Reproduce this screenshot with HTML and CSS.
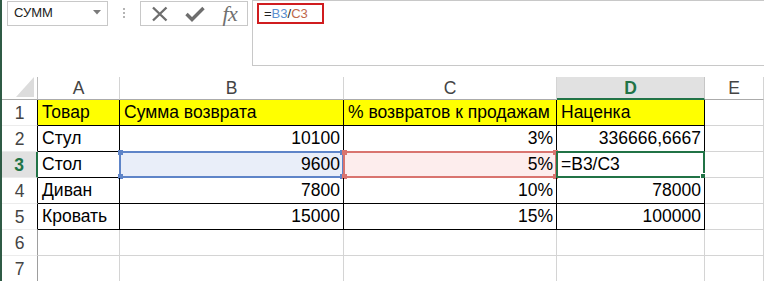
FILE: index.html
```html
<!DOCTYPE html>
<html lang="ru">
<head>
<meta charset="utf-8">
<title>Excel</title>
<link rel="stylesheet" href="styles.css">
</head>
<body>
<div class="page">
  <div class="fbar">
    <div class="namebox">
      <span class="namebox-text">СУММ</span>
      <svg class="namebox-arrow" width="8" height="5" viewBox="0 0 8 5"><polygon points="0,0 8,0 4,4.5" fill="#7a7a7a"/></svg>
    </div>
    <div class="grip"><span></span><span></span><span></span></div>
    <div class="fbtns">
      <div class="fbtn">
        <svg width="18" height="16" viewBox="0 0 18 16"><path d="M2 1.5 L15.5 14.5 M15.5 1.5 L2 14.5" stroke="#6e6e6e" stroke-width="2.4" fill="none"/></svg>
      </div>
      <div class="fbtn">
        <svg width="20" height="16" viewBox="0 0 20 16"><path d="M1.5 8 L7 13.5 L18.5 2" stroke="#6e6e6e" stroke-width="3.4" fill="none"/></svg>
      </div>
      <div class="fbtn"><span class="fx">fx</span></div>
    </div>
    <div class="finput">
      <div class="formula"><span class="op">=</span><span class="ref-b">B3</span><span class="op">/</span><span class="ref-c">C3</span></div>
    </div>
  </div>

  <div class="sheet">
    <div class="corner"><svg width="18" height="20" viewBox="0 0 18 20"><polygon points="18,0 18,20 0,20" fill="#dcdcdc"/></svg></div>
    <div class="ch">A</div>
    <div class="ch">B</div>
    <div class="ch">C</div>
    <div class="ch ch-sel">D</div>
    <div class="ch">E</div>

    <div class="rh rh-t">1</div>
    <div class="c t y">Товар</div>
    <div class="c t y">Сумма возврата</div>
    <div class="c t y">% возвратов к продажам</div>
    <div class="c t y">Наценка</div>
    <div class="c"></div>

    <div class="rh rh-t">2</div>
    <div class="c t">Стул</div>
    <div class="c t r">10100</div>
    <div class="c t r">3%</div>
    <div class="c t r">336666,6667</div>
    <div class="c"></div>

    <div class="rh rh-t rh-sel">3</div>
    <div class="c t">Стол</div>
    <div class="c t r sel-b">9600<span class="hl hl-b"><i class="h tl"></i><i class="h tr"></i><i class="h bl"></i><i class="h br"></i></span></div>
    <div class="c t r sel-c">5%<span class="hl hl-c"><i class="h tl"></i><i class="h tr"></i><i class="h bl"></i><i class="h br"></i></span></div>
    <div class="c t sel-d">=B3/C3<span class="hl hl-d"><i class="h br"></i></span></div>
    <div class="c"></div>

    <div class="rh rh-t">4</div>
    <div class="c t">Диван</div>
    <div class="c t r">7800</div>
    <div class="c t r">10%</div>
    <div class="c t r">78000</div>
    <div class="c"></div>

    <div class="rh rh-t">5</div>
    <div class="c t">Кровать</div>
    <div class="c t r">15000</div>
    <div class="c t r">15%</div>
    <div class="c t r">100000</div>
    <div class="c"></div>

    <div class="rh">6</div>
    <div class="c"></div>
    <div class="c"></div>
    <div class="c"></div>
    <div class="c"></div>
    <div class="c"></div>

    <div class="rh">7</div>
    <div class="c"></div>
    <div class="c"></div>
    <div class="c"></div>
    <div class="c"></div>
    <div class="c"></div>
  </div>
</div>
</body>
</html>
```

FILE: styles.css
```css
* { box-sizing: border-box; }
html, body {
  margin: 0;
  padding: 0;
  background: #fff;
  width: 764px;
  height: 281px;
  overflow: hidden;
}
.page {
  width: 764px;
  height: 281px;
  border-left: 2px solid #2f5b45;
  font-family: "Liberation Sans", Arial, sans-serif;
  color: #000;
}

/* formula bar */
.fbar {
  display: flex;
  align-items: flex-start;
  height: 66px;
  margin-bottom: 11px;
}
.namebox {
  margin-left: 5px;
  margin-top: 1px;
  width: 101px;
  height: 25px;
  border: 1px solid #c8c8c8;
  display: flex;
  align-items: center;
  justify-content: space-between;
  padding: 0 6px 1px 6px;
}
.namebox-text {
  font-size: 13px;
  line-height: 22px;
  color: #222;
}
.namebox-arrow { margin-top: -2px; }
.grip {
  width: 32px;
  height: 25px;
  display: flex;
  flex-direction: column;
  align-items: center;
  gap: 2px;
  padding-top: 8px;
}
.grip span {
  width: 2px;
  height: 2px;
  background: #b4b4b4;
}
.fbtns {
  margin-top: 1px;
  width: 108px;
  height: 25px;
  border: 1px solid #c8c8c8;
  display: flex;
}
.fbtn {
  width: 35px;
  height: 23px;
  display: flex;
  align-items: center;
  justify-content: center;
}
.fbtn:first-child { width: 38px; }
.fx {
  font-family: "Liberation Serif", "Times New Roman", serif;
  font-style: italic;
  font-size: 22px;
  color: #707070;
  letter-spacing: -0.5px;
  line-height: 23px;
}
.finput {
  margin-left: 4px;
  flex: 1;
  height: 66px;
  border-top: 1px solid #c8c8c8;
  border-left: 1px solid #c8c8c8;
  border-bottom: 1px solid #c8c8c8;
  padding: 2px 0 0 4px;
}
.formula {
  width: 67px;
  height: 21px;
  border: 2px solid #d01c1f;
  font-size: 13px;
  line-height: 17px;
  padding-left: 5px;
}
.op { color: #222; }
.ref-b { color: #5b8fd0; }
.ref-c { color: #c0674a; }

/* sheet grid */
.sheet {
  display: grid;
  grid-template-columns: 36px 82px 224px 213px 148px 1fr;
  grid-template-rows: 23px repeat(7, 26px);
  font-size: 17.5px;
}
.corner {
  border-right: 1px solid #bcbcbc;
  border-bottom: 1px solid #ababab;
  display: flex;
  align-items: flex-end;
  justify-content: flex-end;
  padding: 0 3px 2px 0;
}
.ch {
  text-align: center;
  color: #444;
  line-height: 22px;
  border-right: 1px solid #d4d4d4;
  border-bottom: 1px solid #ababab;
}
.ch-sel {
  background: #e1e1e1;
  color: #217346;
  font-weight: bold;
  border-bottom: 2px solid #217346;
  border-right-color: #c6c6c6;
}
.rh {
  text-align: center;
  color: #444;
  line-height: 26px;
  border-right: 1px solid #9e9e9e;
  border-bottom: 1px solid #ececec;
}
.rh-t { border-right-color: #000; }
.rh-sel {
  background: #e1e1e1;
  color: #217346;
  font-weight: bold;
  border-right: 2px solid #217346;
}
.c {
  position: relative;
  line-height: 25px;
  padding: 0 3px 0 4px;
  white-space: nowrap;
  border-right: 1px solid #d4d4d4;
  border-bottom: 1px solid #d4d4d4;
}
.c.t {
  border-right-color: #000;
  border-bottom-color: #000;
}
.c.y { background: #ffff00; }
.c.r { text-align: right; }

.sel-b { background: #e9eef9; }
.sel-c { background: #fdeded; }

/* selection overlays */
.hl {
  position: absolute;
  left: -1px;
  top: -1px;
  right: -1px;
  bottom: -1px;
  pointer-events: none;
}
.hl-b { border: 2px solid #5e84c8; }
.hl-c { border: 2px solid #d9746f; }
.hl-d { border: 2px solid #217346; }
.h {
  position: absolute;
  width: 5px;
  height: 5px;
}
.hl-b .h { background: #5e84c8; }
.hl-c .h { background: #d9746f; }
.hl-d .h { background: #217346; border: 1px solid #fff; width: 6px; height: 6px; }
.tl { left: -3px; top: -3px; }
.tr { right: -3px; top: -3px; }
.bl { left: -3px; bottom: -3px; }
.br { right: -3px; bottom: -3px; }
```
